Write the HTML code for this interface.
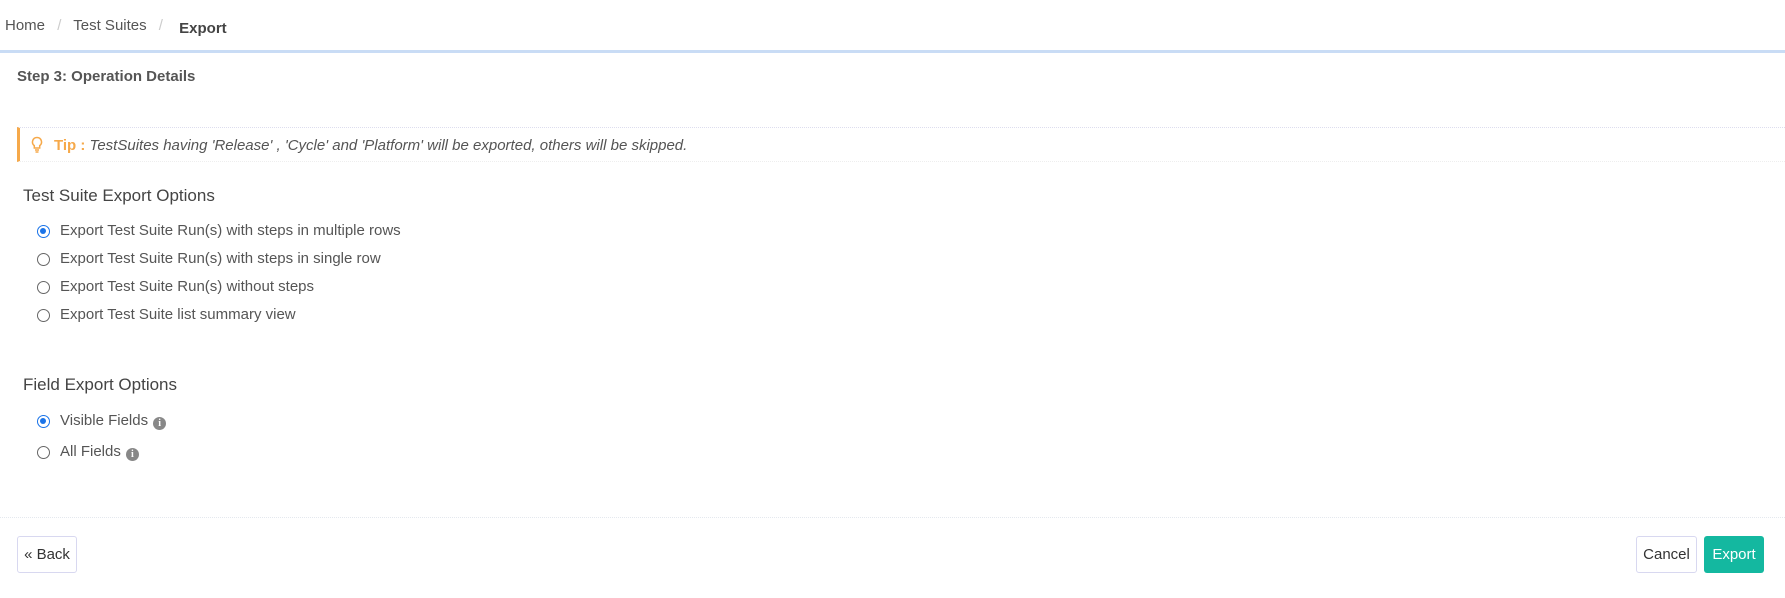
<!DOCTYPE html>
<html><head><style>
body{margin:0;width:1785px;height:598px;background:#fff;font-family:"Liberation Sans",sans-serif;color:#555;position:relative;overflow:hidden}
.a{position:absolute;white-space:nowrap}
.r{position:absolute;width:13px;height:13px;border:1px solid #666;border-radius:50%;box-sizing:border-box}
.r.on{border:1.5px solid #1a73e8}
.r.on::after{content:"";position:absolute;left:2px;top:2px;width:6px;height:6px;border-radius:50%;background:#1a73e8}
.i{display:inline-block;width:13px;height:13px;border-radius:50%;background:#888;color:#fff;font-size:10px;font-weight:bold;text-align:center;line-height:13px;font-family:"Liberation Serif",serif;vertical-align:-1px;margin-left:5px}
.opt{font-size:15px;color:#555}
</style></head><body>
<div class="a" style="left:5px;top:17px;font-size:15px;color:#555">Home <span style="color:#ccc;margin:0 8px">/</span> Test Suites <span style="color:#ccc;margin:0 8px">/</span> <b style="color:#444;position:relative;top:3px;margin-left:4px">Export</b></div>
<div class="a" style="left:0;top:50px;width:1785px;height:3px;background:#c9dcf5"></div>
<div class="a" style="left:17px;top:68px;font-size:15px;font-weight:bold;color:#555">Step 3: Operation Details</div>
<div class="a" style="left:17px;top:127px;width:1768px;height:35px;border-top:1px dotted #dde;border-bottom:1px dotted #eee;border-left:3px solid #f6a94a;box-sizing:border-box"></div>
<svg class="a" style="left:31px;top:136px" width="12" height="17" viewBox="0 0 12 17"><path d="M6 1.5a4.5 4.5 0 0 0-2.7 8.1V12h5.4V9.6A4.5 4.5 0 0 0 6 1.5z" fill="none" stroke="#f6a94a" stroke-width="1.5"/><path d="M4 14h4M4.5 16h3" stroke="#f6a94a" stroke-width="1.5"/></svg>
<div class="a" style="left:54px;top:137px;font-size:15px;font-style:italic;color:#555"><b style="color:#f6a94a;font-style:normal">Tip :</b> TestSuites having 'Release' , 'Cycle' and 'Platform' will be exported, others will be skipped.</div>
<div class="a" style="left:23px;top:186px;font-size:17px;color:#444">Test Suite Export Options</div>
<div class="r on" style="left:37px;top:225px"></div><div class="a opt" style="left:60px;top:222px">Export Test Suite Run(s) with steps in multiple rows</div>
<div class="r" style="left:37px;top:253px"></div><div class="a opt" style="left:60px;top:250px">Export Test Suite Run(s) with steps in single row</div>
<div class="r" style="left:37px;top:281px"></div><div class="a opt" style="left:60px;top:278px">Export Test Suite Run(s) without steps</div>
<div class="r" style="left:37px;top:309px"></div><div class="a opt" style="left:60px;top:306px">Export Test Suite list summary view</div>
<div class="a" style="left:23px;top:375px;font-size:17px;color:#444">Field Export Options</div>
<div class="r on" style="left:37px;top:415px"></div><div class="a opt" style="left:60px;top:412px">Visible Fields<span class="i">i</span></div>
<div class="r" style="left:37px;top:446px"></div><div class="a opt" style="left:60px;top:443px">All Fields<span class="i">i</span></div>
<div class="a" style="left:0;top:517px;width:1785px;border-top:1px dotted #e4e8ee"></div>
<div class="a" style="left:17px;top:536px;width:60px;height:37px;border:1px solid #d8d8f0;border-radius:3px;box-sizing:border-box;font-size:15px;color:#333;text-align:center;line-height:35px">&laquo; Back</div>
<div class="a" style="left:1636px;top:536px;width:61px;height:37px;border:1px solid #d8d8f0;border-radius:3px;box-sizing:border-box;font-size:15px;color:#333;text-align:center;line-height:35px">Cancel</div>
<div class="a" style="left:1704px;top:536px;width:60px;height:37px;background:#14b8a0;border-radius:3px;font-size:15px;color:#fff;text-align:center;line-height:37px">Export</div>
</body></html>
